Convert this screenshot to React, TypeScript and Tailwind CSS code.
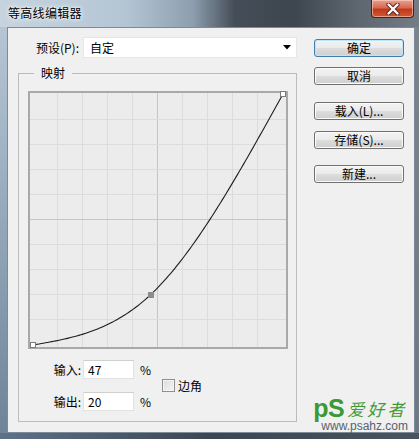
import React from "react";

// natural cubic spline through (0,0) (0.47,0.2) (1,1), like the curves dialog
function curvePath(): string {
  const xs = [0, 0.47, 1];
  const ys = [0, 0.2, 1];
  const h0 = xs[1] - xs[0];
  const h1 = xs[2] - xs[1];
  const m1 = (6 * ((ys[2] - ys[1]) / h1 - (ys[1] - ys[0]) / h0)) / (2 * (h0 + h1));
  const pts: string[] = [];
  for (let i = 0; i <= 120; i++) {
    const x = i / 120;
    let y: number;
    if (x <= xs[1]) {
      y = (m1 * Math.pow(x - xs[0], 3)) / (6 * h0) + (ys[0] / h0) * (xs[1] - x) + (ys[1] / h0 - (m1 * h0) / 6) * (x - xs[0]);
    } else {
      y = (m1 * Math.pow(xs[2] - x, 3)) / (6 * h1) + (ys[1] / h1 - (m1 * h1) / 6) * (xs[2] - x) + (ys[2] / h1) * (x - xs[1]);
    }
    pts.push(`${(5 + x * 250).toFixed(2)},${(254 - y * 251).toFixed(2)}`);
  }
  return "M" + pts.join(" L");
}

function CurveGraph() {
  const lines = [1, 2, 3, 4, 5, 6, 7, 8, 9];
  return (
    <svg width="260" height="258" className="block">
      <rect x="1" y="1" width="258" height="256" fill="#ececec" stroke="#a9a9a9" strokeWidth="2" />
      {lines.map((k) => (
        <line key={"v" + k} x1={4.5 + k * 25} y1="2" x2={4.5 + k * 25} y2="256" stroke={k === 5 ? "#c6c6c6" : "#dcdcdc"} strokeWidth="1" />
      ))}
      {lines.map((k) => (
        <line key={"h" + k} x1="2" y1={253.5 - k * 25} x2="258" y2={253.5 - k * 25} stroke={k === 5 ? "#c6c6c6" : "#dcdcdc"} strokeWidth="1" />
      ))}
      <path d={curvePath()} fill="none" stroke="#1e1e1e" strokeWidth="1.1" />
      <rect x="2.5" y="251.5" width="5" height="5" fill="#fff" stroke="#7a7a7a" />
      <rect x="252.5" y="0.5" width="5" height="5" fill="#fff" stroke="#7a7a7a" />
      <rect x="120" y="201" width="6" height="6" fill="#8c8c8c" />
    </svg>
  );
}

function WinButton({ label, primary, className }: { label: string; primary?: boolean; className?: string }) {
  return (
    <div
      className={
        "w-[90px] h-[18px] rounded-[3px] border flex items-center justify-center text-[12px] leading-[14px] text-black bg-[linear-gradient(180deg,#f3f3f3_0%,#ebebeb_48%,#dddddd_52%,#cfcfcf_100%)] " +
        (primary ? "border-[#3c7fb1] shadow-[inset_0_0_0_1px_#bfe5fb] " : "border-[#707070] shadow-[inset_0_0_0_1px_#fbfbfb] ") +
        (className ?? "")
      }
    >
      {label}
    </div>
  );
}

function InputRow({ label, value, className }: { label: string; value: string; className?: string }) {
  return (
    <div className={"flex items-center h-[19px] " + (className ?? "")}>
      <span className="w-[53px] text-right text-[12px] leading-[14px]">{label}</span>
      <div className="ml-[2px] w-[51px] h-[19px] bg-white border border-[#e2e2e2] border-t-[#cfcfcf] pl-[4px] flex items-center text-[12px] leading-[14px]">
        {value}
      </div>
      <span className="ml-[6px] w-[12px] text-[12px] leading-[14px]">%</span>
    </div>
  );
}

export default function App() {
  return (
    <div className="relative w-[419px] h-[439px] flex flex-col overflow-hidden font-['Noto_Sans_CJK_SC','Noto_Sans',sans-serif] text-black bg-[#59687a]">
      {/* title bar */}
      <div className="h-[27px] flex items-start justify-between bg-[linear-gradient(90deg,#c7d4df_0%,#b4c5d4_30%,#8d9eae_46%,#454e58_56%,#3d454e_70%,#5d666e_85%,#747d85_100%)]">
        <span className="pl-[8px] pt-[5px] text-[12px] leading-[16px] tracking-[0.3px] [text-shadow:0_0_6px_#ffffff,0_0_3px_#ffffff]">
          等高线编辑器
        </span>
        <div className="mr-[5px] w-[43px] h-[18px] rounded-b-[4px] border border-t-0 border-[#4c1f18] bg-[linear-gradient(180deg,#e9a18f_0%,#d86a52_45%,#c2381c_55%,#cf5a33_100%)] shadow-[inset_0_0_0_1px_rgba(255,220,210,0.55)] flex items-center justify-center">
          <svg width="14" height="12" viewBox="0 0 14 12">
            <path d="M2.5 1.5 L11.5 10.5 M11.5 1.5 L2.5 10.5" stroke="#5a2318" strokeWidth="4.2" strokeLinecap="round" />
            <path d="M2.5 1.5 L11.5 10.5 M11.5 1.5 L2.5 10.5" stroke="#ffffff" strokeWidth="2.4" strokeLinecap="round" />
          </svg>
        </div>
      </div>

      <div className="flex h-[406px]">
        <div className="w-[7px] bg-[linear-gradient(180deg,#b6c5d3_0%,#9aadc0_40%,#6f8399_100%)]" />
        {/* client area */}
        <div className="flex-1 flex border border-[#7d8b99] bg-[#f0f0f0]">
          <div className="w-[289px] pl-[10px] pt-[9px]">
            <div className="flex items-center h-[21px]">
              <span className="w-[61px] text-right text-[12px] leading-[14px]">预设(P):</span>
              <div className="ml-[4px] w-[214px] h-[21px] bg-white border border-[#e6e6e6] flex items-center justify-between pl-[6px] pr-[5px]">
                <span className="text-[12px] leading-[14px]">自定</span>
                <svg width="8" height="5" viewBox="0 0 8 5">
                  <path d="M0 0 H8 L4 4.5 Z" fill="#000" />
                </svg>
              </div>
            </div>

            <fieldset className="mt-[7px] w-[279px] border border-[#bcbcbc] pl-[9px] pt-[10px] pb-[10px]">
              <legend className="ml-[6px] px-[7px] text-[12px] leading-[16px]">映射</legend>
              <CurveGraph />
              <div className="mt-[11px] flex items-center">
                <div className="flex flex-col">
                  <InputRow label="输入:" value="47" />
                  <InputRow label="输出:" value="20" className="mt-[13px]" />
                </div>
                <div className="ml-[10px] flex items-center">
                  <div className="w-[13px] h-[13px] border border-[#8e8f8f] bg-[linear-gradient(135deg,#dcdcdc_0%,#f5f5f5_100%)] shadow-[inset_0_0_0_1px_#f4f4f4]" />
                  <span className="ml-[3px] text-[12px] leading-[14px]">边角</span>
                </div>
              </div>
            </fieldset>
          </div>

          <div className="ml-[17px] pt-[11px] flex flex-col">
            <WinButton label="确定" primary />
            <WinButton label="取消" className="mt-[10px]" />
            <WinButton label="载入(L)..." className="mt-[17px]" />
            <WinButton label="存储(S)..." className="mt-[11px]" />
            <WinButton label="新建..." className="mt-[16px]" />
          </div>
        </div>
        <div className="w-[4px] bg-[linear-gradient(180deg,#7a848d_0%,#6c7884_100%)]" />
      </div>
      <div className="h-[6px] bg-[linear-gradient(90deg,#5d7189_0%,#3c4652_50%,#4a545e_100%)]" />

      {/* watermark */}
      <div className="absolute right-[11px] bottom-[6px] flex flex-col">
        <div className="flex items-start h-[17px]">
          <span className="font-['Liberation_Sans',sans-serif] font-bold text-[25px] leading-[17px] h-[17px] tracking-[-0.5px] text-[#3a9a36]">
            pS
          </span>
          <span className="ml-[3px] text-[17px] leading-[17px] tracking-[3px] italic text-[#3f9b34]">爱好者</span>
        </div>
        <span className="mt-[3px] ml-[8px] font-['Liberation_Sans',sans-serif] text-[12px] leading-[13px] text-[#56636b]">www.psahz.com</span>
      </div>
    </div>
  );
}
